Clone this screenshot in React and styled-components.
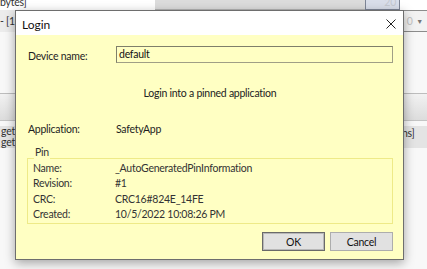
import React from "react";
import styled, { createGlobalStyle } from "styled-components";

const GlobalStyle = createGlobalStyle`
  html, body {
    margin: 0;
    padding: 0;
    background: #f7f7f7;
    font-family: Lato, "Liberation Sans", sans-serif;
    font-size: 10.5px;
    letter-spacing: -0.25px;
    color: #1e1e1e;
    overflow: hidden;
  }
`;

const Screen = styled.div`
  position: relative;
  width: 427px;
  height: 269px;
  overflow: hidden;
  background: #f8f8f8;
`;

/* background application, seen behind the dialog */
const TopStrip = styled.div`
  display: flex;
  height: 10px;
  background: #ffffff;
`;

const TopText = styled.div`
  width: 155px;
  line-height: 4px;
  color: #333;
  overflow: hidden;
  white-space: nowrap;
`;

const GreyBar = styled.div`
  width: 210px;
  background: #dcdcdc;
  border-bottom: 1px solid #b4b4b4;
`;

const BlueBox = styled.div`
  width: 30px;
  background: #d9deea;
  border: 1px solid #7d8596;
  border-top: none;
  color: #c4c8d0;
  text-align: right;
  padding-right: 3px;
  line-height: 4px;
`;

const SecondRow = styled.div`
  display: flex;
  justify-content: space-between;
  height: 22px;
`;

const ClipCell = styled.div`
  display: flex;
  justify-content: ${(p) => (p.$end ? "flex-end" : "flex-start")};
  width: ${(p) => p.$w}px;
  background: ${(p) => p.$bg || "#ececec"};
  line-height: ${(p) => p.$lh || 22}px;
  white-space: pre;
  overflow: hidden;
  color: #333;
`;

const Combo = styled.div`
  display: flex;
  width: 24px;
  border: 1px solid #8c8c8c;
  border-right: none;
  background: #f2f2f2;
  color: #c2c2c2;
  line-height: 20px;
  span { flex: 1; text-align: center; }
  i { font-style: normal; font-size: 7px; color: #777; padding-right: 4px; }
`;

const Gap = styled.div`
  height: ${(p) => p.$h}px;
`;

const HeaderBand = styled.div`
  height: 26px;
  border-top: 1px solid #bdbdbd;
  border-bottom: 1px solid #c4c4c4;
  background: linear-gradient(#f2f2f2, #dcdcdc);
`;

const ListArea = styled.div`
  display: flex;
  justify-content: space-between;
  margin-top: 5px;
`;

/* dialog */
const Dialog = styled.div`
  position: absolute;
  left: 15px;
  top: 10px;
  width: 387px;
  height: 248px;
  border: 1px solid #6e6e6e;
  background: #ffffc3;
  box-shadow: 0 3px 10px rgba(0, 0, 0, 0.35);
  display: flex;
  flex-direction: column;
`;

const TitleBar = styled.div`
  display: flex;
  align-items: center;
  justify-content: space-between;
  height: 22px;
  padding: 2px 7px 0 6px;
  background: #ffffff;
  font-size: 12px;
  letter-spacing: 0;
  color: #111;
`;

const CloseX = styled.svg`
  width: 10px;
  height: 10px;
`;

const Body = styled.div`
  flex: 1;
  display: flex;
  flex-direction: column;
  padding: 11px 10px 0 11px;
`;

const FieldRow = styled.div`
  display: grid;
  grid-template-columns: 88px 1fr;
  align-items: center;
  line-height: 14px;
  margin-top: ${(p) => p.$mt || 0}px;
  padding-left: 1px;
`;

const RowLabel = styled.span`
  padding-top: ${(p) => p.$drop || 0}px;
`;

const Input = styled.div`
  height: 15px;
  border: 1px solid #a09f86;
  border-top-color: #7f7f6a;
  border-left-color: #7f7f6a;
  background: #ffffc3;
  line-height: 14px;
  padding-left: 2px;
  color: #111;
`;

const Message = styled.div`
  text-align: center;
  line-height: 14px;
  margin-top: ${(p) => p.$mt}px;
  color: #222;
`;

const Group = styled.div`
  margin-top: 22px;
  padding: 4px 0 1px 5px;
  border: 1px solid #eeea88;
`;

const Legend = styled.div`
  width: fit-content;
  margin: -18px 0 2px 1px;
  padding: 0 1px;
  line-height: 14px;
  background: #ffffc3;
  color: #333;
`;

const InfoGrid = styled.div`
  display: grid;
  grid-template-columns: 82px 1fr;
  line-height: 15.3px;
  color: #333;
`;

const Buttons = styled.div`
  display: flex;
  justify-content: flex-end;
  gap: 5px;
  margin-top: 8px;
`;

const Button = styled.button`
  width: 63px;
  height: 19px;
  border: 1px solid ${(p) => (p.$default ? "#6a6a6a" : "#adadad")};
  box-shadow: ${(p) => (p.$default ? "inset 0 0 0 1px #b8b8b8" : "none")};
  background: #e1e1e1;
  font-family: inherit;
  font-size: 10.5px;
  letter-spacing: -0.25px;
  color: #111;
  padding: 0;
`;

const pinRows = [
  ["Name:", "_AutoGeneratedPinInformation"],
  ["Revision:", "#1"],
  ["CRC:", "CRC16#824E_14FE"],
  ["Created:", "10/5/2022 10:08:26 PM"],
];

export default function App() {
  return (
    <>
      <GlobalStyle />
      <Screen>
        <TopStrip>
          <TopText>bytes]</TopText>
          <GreyBar />
          <BlueBox>20</BlueBox>
        </TopStrip>
        <SecondRow>
          <ClipCell $w={20}>- [1E</ClipCell>
          <Combo>
            <span>0</span>
            <i>▼</i>
          </Combo>
        </SecondRow>
        <Gap $h={61} />
        <HeaderBand />
        <ListArea>
          <ClipCell $w={15} $end $lh={11} $bg="#e4e4e4">
            {"get\nget"}
          </ClipCell>
          <ClipCell $w={25} $lh={14} $bg="#e4e4e4">
            {"ns]"}
          </ClipCell>
        </ListArea>

        <Dialog>
          <TitleBar>
            <span>Login</span>
            <CloseX viewBox="0 0 10 10">
              <path d="M0.5 0.5 L9.5 9.5 M9.5 0.5 L0.5 9.5" stroke="#222" strokeWidth="1" />
            </CloseX>
          </TitleBar>
          <Body>
            <FieldRow>
              <RowLabel $drop={3}>Device name:</RowLabel>
              <Input>default</Input>
            </FieldRow>
            <Message $mt={23}>Login into a pinned application</Message>
            <FieldRow $mt={22}>
              <RowLabel>Application:</RowLabel>
              <span>SafetyApp</span>
            </FieldRow>
            <Group>
              <Legend>Pin</Legend>
              <InfoGrid>
                {pinRows.map(([k, v]) => (
                  <React.Fragment key={k}>
                    <span>{k}</span>
                    <span>{v}</span>
                  </React.Fragment>
                ))}
              </InfoGrid>
            </Group>
            <Buttons>
              <Button $default>OK</Button>
              <Button>Cancel</Button>
            </Buttons>
          </Body>
        </Dialog>
      </Screen>
    </>
  );
}
